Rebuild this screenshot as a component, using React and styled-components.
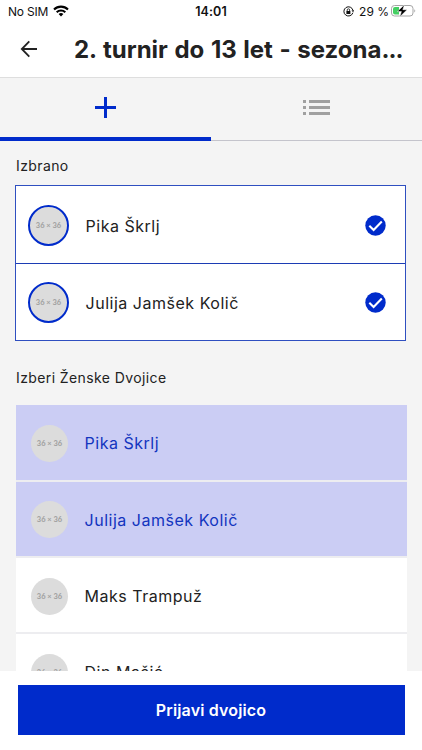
import React from 'react'
import styled, { createGlobalStyle } from 'styled-components'

const BLUE = '#002bcb'

const GlobalStyle = createGlobalStyle`
    * {
        box-sizing: border-box;
    }
    body {
        margin: 0;
        background: #fff;
        font-family: Inter, "Liberation Sans", sans-serif;
        color: #222;
    }
`;

// Styled components
const Screen = styled.div`
    display: flex;
    flex-direction: column;
    width: 422px;
    height: 750px;
    overflow: hidden;
    background: #fff;
`;
const StatusBar = styled.div`
    display: grid;
    grid-template-columns: 1fr auto 1fr;
    align-items: center;
    height: 22px;
    flex: none;
    padding: 0 5px 0 8px;
    font-size: 12px;
    color: #111;
`;
const StatusGroup = styled.div`
    display: flex;
    align-items: center;
    justify-content: ${props => props.$end ? 'flex-end' : 'flex-start'};
    gap: 5px;
    white-space: nowrap;
    letter-spacing: ${props => props.$end ? '0' : '-.2px'};
    svg {
        display: block;
    }
`;
const Battery = styled.div`
    display: flex;
    align-items: center;
    gap: 2px;
`;
const Time = styled.div`
    padding-right: 3px;
    font-size: 12.5px;
    font-weight: 600;
    letter-spacing: .1px;
`;
const Header = styled.header`
    display: flex;
    align-items: center;
    height: 56px;
    flex: none;
    padding: 0 19px;
    border-bottom: 1px solid #dedede;
`;
const BackButton = styled.button`
    display: flex;
    width: 55px;
    flex: none;
    padding: 0 0 1px;
    border: 0;
    background: none;
`;
const Title = styled.h1`
    flex: 1;
    margin: 0;
    font-size: 24px;
    line-height: 32px;
    font-weight: 700;
    white-space: nowrap;
    word-spacing: .9px;
`;
const Dots = styled.span`
    letter-spacing: -1px;
`;
const Content = styled.main`
    flex: 1;
    min-height: 0;
    overflow: hidden;
    background: #f4f4f4;
`;
const Tabs = styled.div`
    display: flex;
    height: 63px;
`;
const Tab = styled.div`
    display: flex;
    flex: 1;
    align-items: center;
    justify-content: center;
    border-bottom: ${props => props.$active ? `4px solid ${BLUE}` : '1px solid #c4c4cc'};
    padding-bottom: ${props => props.$active ? '0' : '4px'};
`;
const SectionTitle = styled.h2`
    margin: 0;
    padding: ${props => props.$first ? '15px 16px 10px' : '27px 16px 18.3px'};
    font-size: 14px;
    line-height: 19px;
    font-weight: 400;
    letter-spacing: .4px;
`;
const SelectedList = styled.div`
    display: flex;
    flex-direction: column;
    margin: 0 16px 0 15px;
    border: 1px solid #2f4fc0;
    background: #fff;
`;
const SelectedRow = styled.div`
    display: flex;
    align-items: center;
    height: 77px;
    padding: 2px 19.5px 0 12px;
    & + & {
        padding-top: 1px;
        border-top: 1px solid #1c3cb4;
    }
`;
const Avatar = styled.div`
    display: flex;
    align-items: center;
    justify-content: center;
    flex: none;
    width: ${props => props.$ring ? '41px' : '37px'};
    height: ${props => props.$ring ? '41px' : '37px'};
    border: ${props => props.$ring ? `2px solid ${BLUE}` : '0'};
    border-radius: 50%;
    background: #dcdcdc;
    color: #a4a4a4;
    font-family: Lato, sans-serif;
    font-size: 7.5px;
    font-weight: 900;
    white-space: nowrap;
`;
const Name = styled.span`
    flex: 1;
    margin-left: 16.5px;
    font-size: 16px;
    line-height: 20px;
    letter-spacing: .52px;
    color: ${props => props.$picked ? '#1335bf' : '#222'};
`;
const PlayerList = styled.div`
    display: flex;
    flex-direction: column;
    gap: 2px;
    margin: 0 15.5px;
    background: #ededf0;
`;
const PlayerRow = styled.div`
    display: flex;
    align-items: center;
    flex: none;
    height: 74.3px;
    padding: 2px 15.5px 0;
    background: ${props => props.$picked ? '#cbcdf4' : '#fff'};
`;
const Footer = styled.footer`
    display: flex;
    height: 79px;
    flex: none;
    padding: 14px 17.5px 15px;
    background: #fff;
`;
const SubmitButton = styled.button`
    flex: 1;
    padding: 0;
    border: 0;
    background: ${BLUE};
    color: #fff;
    font-family: inherit;
    font-size: 16px;
    font-weight: 600;
    letter-spacing: .15px;
`;

const WifiIcon = () => (
    <svg width="16" height="12" viewBox="0 0 16 12" fill="none" stroke="#000" strokeWidth="2.1">
        <path d="M1 4.4a10.1 10.1 0 0 1 14 0" />
        <path d="M3.7 7.2a6.2 6.2 0 0 1 8.6 0" />
        <path d="M8 11.6 5.6 9.1a3.5 3.5 0 0 1 4.8 0z" fill="#000" stroke="none" />
    </svg>
)

const LockIcon = () => (
    <svg width="11" height="11" viewBox="0 0 11 11" fill="none" stroke="#111">
        <path d="M9.9 6.7A4.6 4.6 0 1 1 10 4.5" />
        <path d="m8.5 4.5 1.6 1.7 1-2" fill="#111" stroke="none" />
        <rect x="3.4" y="5" width="4" height="3" fill="#111" stroke="none" />
        <path d="M4.2 5V4a1.2 1.2 0 0 1 2.4 0v1" strokeWidth=".8" />
    </svg>
)

const BatteryIcon = () => (
    <svg width="26" height="14" viewBox="0 0 26 14">
        <rect x=".5" y="1.5" width="21.5" height="10.5" rx="3" fill="#fff" stroke="#a5a5a5" />
        <path d="M4 3h4v7.6H4a2 2 0 0 1-2-2V5a2 2 0 0 1 2-2z" fill="#44cf63" />
        <path d="M23.3 5.2c1.3.5 1.3 2.7 0 3.2z" fill="#a5a5a5" />
        <path d="M13.4.7 6.3 7.6h4.1L8.8 12.8l7.3-7.1h-4.3z" fill="#000" stroke="#fff" strokeWidth=".5" />
    </svg>
)

const BackIcon = () => (
    <svg width="20" height="20" viewBox="0 0 20 20" fill="none" stroke="#222" strokeWidth="1.8">
        <path d="M18 10H3M10.3 2.4 2.8 10l7.5 7.6" />
    </svg>
)

const PlusIcon = () => (
    <svg width="21" height="21" viewBox="0 0 21 21" fill={BLUE}>
        <path d="M9 0h3v9h9v3h-9v9H9v-9H0V9h9z" />
    </svg>
)

const ListIcon = () => (
    <svg width="27" height="16" viewBox="0 0 27 16" fill="#a0a0a0">
        <path d="M0 1h3v3H0zM6 1h21v3H6zM0 7h3v3H0zM6 7h21v3H6zM0 13h3v3H0zM6 13h21v3H6z" />
    </svg>
)

const CheckIcon = () => (
    <svg width="21" height="21" viewBox="0 0 21 21" fill="none">
        <circle cx="10.5" cy="10.5" r="10.2" fill={BLUE} />
        <path d="m4.3 10.7 4.3 4.2 8.2-8.3" stroke="#fff" strokeWidth="2.1" />
    </svg>
)

const selected = ['Pika Škrlj', 'Julija Jamšek Količ']

const players = [
    { name: 'Pika Škrlj', picked: true },
    { name: 'Julija Jamšek Količ', picked: true },
    { name: 'Maks Trampuž', picked: false },
    { name: 'Din Mašić', picked: false },
]

const App = () => (
    <>
        <GlobalStyle />
        <Screen>
            <StatusBar>
                <StatusGroup>
                    No SIM
                    <WifiIcon />
                </StatusGroup>
                <Time>14:01</Time>
                <StatusGroup $end>
                    <LockIcon />
                    <Battery>
                        <span>29 %</span>
                        <BatteryIcon />
                    </Battery>
                </StatusGroup>
            </StatusBar>
            <Header>
                <BackButton aria-label="Nazaj"><BackIcon /></BackButton>
                <Title>2. turnir do 13 let - sezona<Dots>...</Dots></Title>
            </Header>
            <Content>
                <Tabs>
                    <Tab $active><PlusIcon /></Tab>
                    <Tab><ListIcon /></Tab>
                </Tabs>
                <SectionTitle $first>Izbrano</SectionTitle>
                <SelectedList>
                    {selected.map(name => (
                        <SelectedRow key={name}>
                            <Avatar $ring>36 × 36</Avatar>
                            <Name>{name}</Name>
                            <CheckIcon />
                        </SelectedRow>
                    ))}
                </SelectedList>
                <SectionTitle>Izberi Ženske Dvojice</SectionTitle>
                <PlayerList>
                    {players.map(player => (
                        <PlayerRow key={player.name} $picked={player.picked}>
                            <Avatar>36 × 36</Avatar>
                            <Name $picked={player.picked}>{player.name}</Name>
                        </PlayerRow>
                    ))}
                </PlayerList>
            </Content>
            <Footer>
                <SubmitButton>Prijavi dvojico</SubmitButton>
            </Footer>
        </Screen>
    </>
)

export default App
